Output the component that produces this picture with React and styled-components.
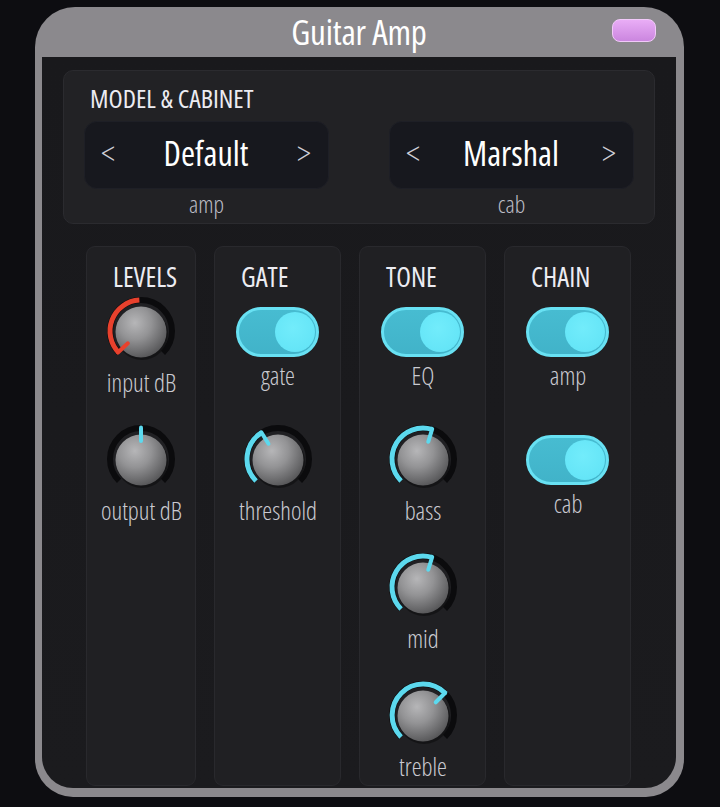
import React from "react";
import styled, { createGlobalStyle } from "styled-components";

const GlobalStyle = createGlobalStyle`
  html, body { margin: 0; padding: 0; background: #0d0d11; }
  body {
    font-family: "Open Sans", "DejaVu Sans", sans-serif;
    font-stretch: 75%;
    color: #e8e8ee;
  }
  * { box-sizing: border-box; }
`;

const Page = styled.div`
  width: 720px;
  height: 807px;
  padding: 7px 0 0 35px;
`;

const Window = styled.div`
  width: 649px;
  height: 790px;
  background: #8b898d;
  border-radius: 40px 40px 38px 38px;
  padding: 0 8px 9px 7px;
  display: flex;
  flex-direction: column;
  overflow: hidden;
`;

const TitleBar = styled.div`
  height: 50px;
  flex: none;
  display: grid;
  grid-template-columns: 1fr auto 1fr;
  align-items: center;
`;

const Title = styled.div`
  grid-column: 2;
  font-size: 35px;
  font-weight: 380;
  color: #ffffff;
  line-height: 50px;
  letter-spacing: -0.2px;
`;

const PillButton = styled.button`
  grid-column: 3;
  justify-self: end;
  margin-right: 20px;
  margin-top: -3px;
  width: 44px;
  height: 23px;
  border-radius: 8px;
  border: 1.5px solid #f1c9f9;
  background: linear-gradient(180deg, #e9adf6 0%, #cb86df 100%);
  padding: 0;
`;

const Body = styled.div`
  flex: 1;
  min-height: 0;
  background: linear-gradient(180deg, #19191c 0%, #1b1b1e 100%);
  border-radius: 0 0 31px 31px;
  padding: 13px 21px 2px;
  display: flex;
  flex-direction: column;
`;

const ModelPanel = styled.section`
  height: 154px;
  flex: none;
  background: #222225;
  border: 1px solid #2b2b2f;
  border-radius: 10px;
  padding: 12px 20px 0;
`;

const PanelLabel = styled.div`
  font-size: 26px;
  font-weight: 370;
  line-height: 31px;
  padding-left: 6px;
  color: #ececf2;
`;

const SelectorGrid = styled.div`
  display: grid;
  grid-template-columns: 1fr 1fr;
  column-gap: 60px;
  margin-top: 7px;
`;

const SelectorCell = styled.div`
  display: flex;
  flex-direction: column;
  align-items: stretch;
`;

const SelectorBox = styled.div`
  height: 68px;
  background: #17181e;
  border: 1px solid #1e1f26;
  border-radius: 13px;
  display: flex;
  align-items: center;
  justify-content: space-between;
  padding: 0 17px 0 16px;
`;

const Arrow = styled.span`
  font-size: 34px;
  font-weight: 300;
  color: #cdcdd5;
  line-height: 1;
  padding-bottom: 5px;
`;

const SelectorValue = styled.span`
  font-size: 34px;
  font-weight: 380;
  color: #ffffff;
  line-height: 1;
  padding-bottom: 4px;
`;

const Caption = styled.div`
  text-align: center;
  font-size: 24px;
  font-weight: 350;
  line-height: 28px;
  margin-top: 1px;
  color: #bdbdc5;
`;

const Columns = styled.div`
  flex: 1;
  min-height: 0;
  display: grid;
  grid-template-columns: 110px repeat(3, 127px);
  column-gap: 18px;
  margin: 22px 0 0 23px;
`;

const Column = styled.section`
  min-height: 0;
  background: #202023;
  border: 1px solid #29292d;
  border-radius: 9px;
  padding-top: 14px;
  display: flex;
  flex-direction: column;
`;

const ColumnTitle = styled.div`
  font-size: 27px;
  font-weight: 370;
  line-height: 31px;
  padding-left: 26px;
  color: #ececf2;
`;

const Item = styled.div`
  height: 128px;
  flex: none;
  display: flex;
  flex-direction: column;
  align-items: center;
  &:last-child {
    height: auto;
  }
`;

const ControlArea = styled.div`
  height: ${(p) => (p.$toggle ? "71px" : "78px")};
  padding-top: ${(p) => (p.$toggle ? "15px" : "0")};
  display: flex;
  justify-content: center;
  align-items: flex-start;
`;

const ItemLabel = styled.div`
  font-size: 25px;
  font-weight: 340;
  line-height: 24px;
  color: #cacad1;
  padding-left: 1px;
`;

const ToggleTrack = styled.div`
  width: 83px;
  height: 50px;
  border-radius: 25px;
  border: 3px solid #68e1f3;
  background: linear-gradient(180deg, #47bcd1 0%, #41b3c9 100%);
  display: flex;
  justify-content: ${(p) => (p.$on ? "flex-end" : "flex-start")};
  align-items: center;
  padding: 0 1px;
`;

const ToggleThumb = styled.div`
  width: 40px;
  height: 40px;
  border-radius: 50%;
  background: radial-gradient(circle at 45% 40%, #72ecfb 0%, #65e5f7 70%, #5ddaef 100%);
`;

const KnobSvg = styled.svg`
  display: block;
  overflow: visible;
`;

const C = 39;
const polar = (r, deg) => {
  const a = ((deg - 90) * Math.PI) / 180;
  return [C + r * Math.cos(a), C + r * Math.sin(a)];
};
const arc = (r, a0, a1) => {
  const [x0, y0] = polar(r, a0);
  const [x1, y1] = polar(r, a1);
  const large = a1 - a0 > 180 ? 1 : 0;
  return `M${x0.toFixed(2)} ${y0.toFixed(2)} A${r} ${r} 0 ${large} 1 ${x1.toFixed(2)} ${y1.toFixed(2)}`;
};

let knobId = 0;
function Knob({ color, arcEnd, pointer }) {
  const id = React.useMemo(() => `kg${knobId++}`, []);
  const [px0, py0] = polar(18, pointer);
  const [px1, py1] = polar(31.5, pointer);
  return (
    <KnobSvg width="78" height="78" viewBox="0 0 78 78">
      <defs>
        <radialGradient id={id} cx="38%" cy="32%" r="72%">
          <stop offset="0%" stopColor="#b6b6b8" />
          <stop offset="45%" stopColor="#939395" />
          <stop offset="100%" stopColor="#555557" />
        </radialGradient>
      </defs>
      <path d={arc(31, -135, 135)} stroke="#0b0b0d" strokeWidth="6" fill="none" />
      {arcEnd != null && (
        <path d={arc(31, -135, arcEnd)} stroke={color} strokeWidth="5" fill="none" />
      )}
      <circle cx={C + 1} cy={C + 3} r="26" fill="#0f0f11" opacity="0.7" />
      <circle cx={C} cy={C + 1} r="25.5" fill={`url(#${id})`} />
      <line
        x1={px0}
        y1={py0}
        x2={px1}
        y2={py1}
        stroke={color}
        strokeWidth="4"
        strokeLinecap="round"
      />
    </KnobSvg>
  );
}

function Toggle({ on = true }) {
  return (
    <ToggleTrack $on={on}>
      <ToggleThumb />
    </ToggleTrack>
  );
}

const RED = "#e8412d";
const CYAN = "#5cd9ee";

function KnobItem({ label, ...knob }) {
  return (
    <Item>
      <ControlArea>
        <Knob {...knob} />
      </ControlArea>
      <ItemLabel>{label}</ItemLabel>
    </Item>
  );
}

function ToggleItem({ label }) {
  return (
    <Item>
      <ControlArea $toggle>
        <Toggle on />
      </ControlArea>
      <ItemLabel>{label}</ItemLabel>
    </Item>
  );
}

function Selector({ value, caption }) {
  return (
    <SelectorCell>
      <SelectorBox>
        <Arrow>&lt;</Arrow>
        <SelectorValue>{value}</SelectorValue>
        <Arrow>&gt;</Arrow>
      </SelectorBox>
      <Caption>{caption}</Caption>
    </SelectorCell>
  );
}

export default function App() {
  return (
    <>
      <GlobalStyle />
      <Page>
        <Window>
          <TitleBar>
            <Title>Guitar Amp</Title>
            <PillButton aria-label="menu" />
          </TitleBar>
          <Body>
            <ModelPanel>
              <PanelLabel>MODEL &amp; CABINET</PanelLabel>
              <SelectorGrid>
                <Selector value="Default" caption="amp" />
                <Selector value="Marshal" caption="cab" />
              </SelectorGrid>
            </ModelPanel>
            <Columns>
              <Column>
                <ColumnTitle>LEVELS</ColumnTitle>
                <KnobItem label="input dB" color={RED} arcEnd={-3} pointer={-133} />
                <KnobItem label="output dB" color={CYAN} arcEnd={null} pointer={0} />
              </Column>
              <Column>
                <ColumnTitle>GATE</ColumnTitle>
                <ToggleItem label="gate" />
                <KnobItem label="threshold" color={CYAN} arcEnd={-32} pointer={-32} />
              </Column>
              <Column>
                <ColumnTitle>TONE</ColumnTitle>
                <ToggleItem label="EQ" />
                <KnobItem label="bass" color={CYAN} arcEnd={17} pointer={17} />
                <KnobItem label="mid" color={CYAN} arcEnd={17} pointer={17} />
                <KnobItem label="treble" color={CYAN} arcEnd={45} pointer={45} />
              </Column>
              <Column>
                <ColumnTitle>CHAIN</ColumnTitle>
                <ToggleItem label="amp" />
                <ToggleItem label="cab" />
              </Column>
            </Columns>
          </Body>
        </Window>
      </Page>
    </>
  );
}
